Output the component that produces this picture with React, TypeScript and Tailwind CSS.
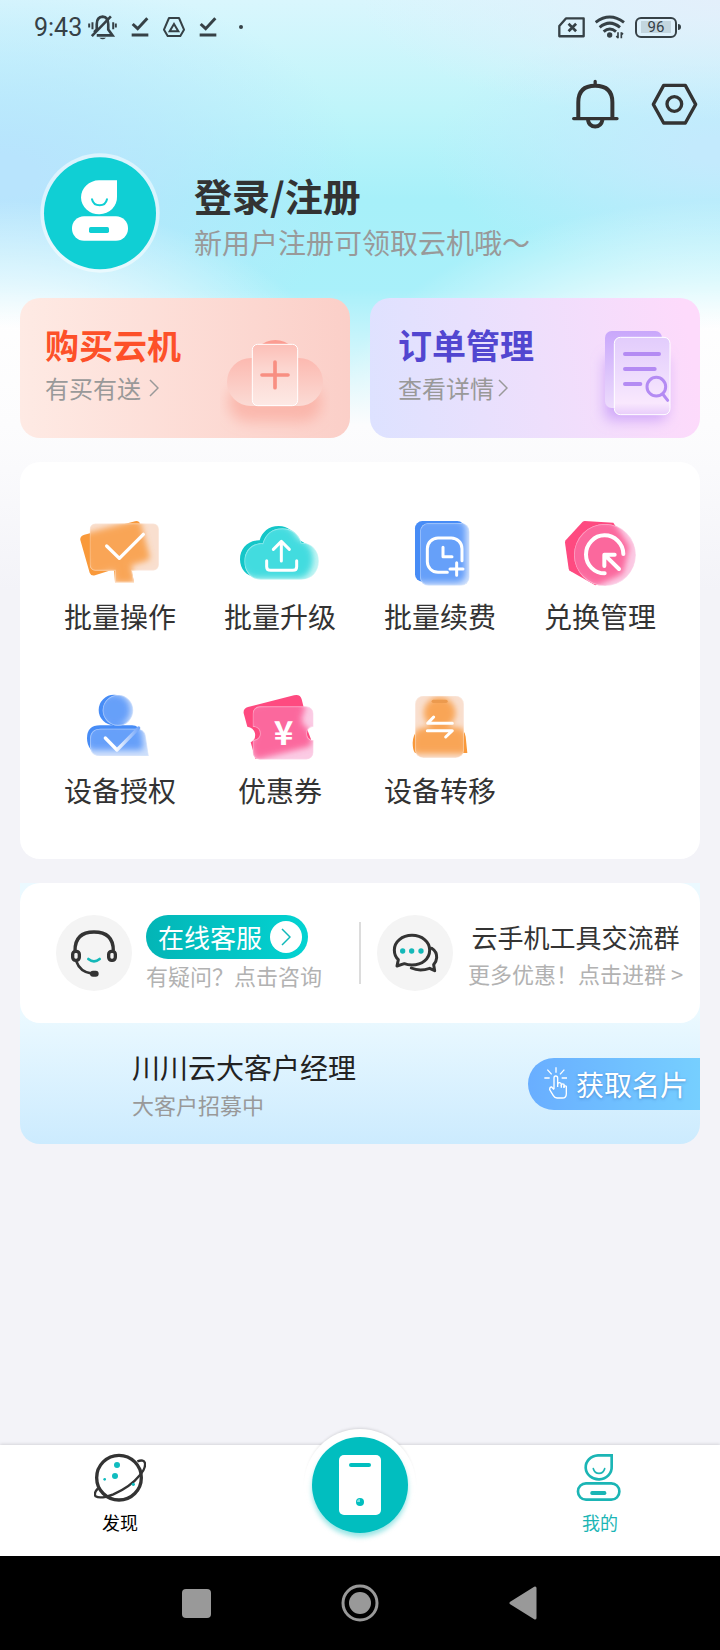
import type { ReactNode } from 'react';

type GlassIconProps = {
  id: string;
  viewBox: string;
  back: string;
  glass: string;
  dark: string;
  mid: string;
  tint: string;
  children: ReactNode;
};

// Solid shape in the back, frosted shape in front of it.
function GlassIcon({ id, viewBox, back, glass, dark, mid, tint, children }: GlassIconProps) {
  return (
    <svg viewBox={viewBox} className="h-[72px] w-20" aria-hidden="true">
      <defs>
        <clipPath id={`${id}-clip`}>
          <path d={glass} />
        </clipPath>
        <filter id={`${id}-blur`} x="-20%" y="-20%" width="140%" height="140%">
          <feGaussianBlur stdDeviation="9" />
        </filter>
      </defs>
      <path d={back} fill={dark} />
      <g clipPath={`url(#${id}-clip)`}>
        <path d={glass} fill={tint} />
        <path d={back} fill={mid} filter={`url(#${id}-blur)`} />
        <path d={back} fill={mid} fillOpacity="0.5" filter={`url(#${id}-blur)`} />
        <path d={glass} fill="none" stroke="#fff" strokeOpacity="0.35" strokeWidth="5" />
      </g>
      <g fill="none" stroke="#fff" strokeWidth="10" strokeLinecap="round" strokeLinejoin="round">
        {children}
      </g>
    </svg>
  );
}

const ORANGE = { dark: '#f9993a', mid: '#f9a656', tint: '#f9dfcf' };
const TEAL = { dark: '#14c6c8', mid: '#43dcdf', tint: '#c5f5f4' };
const BLUE = { dark: '#478cf6', mid: '#669ffa', tint: '#cfe0fb' };
const PINK = { dark: '#fe4a80', mid: '#fc689e', tint: '#fbcbe4' };

const ACTIONS: { label: string; icon: ReactNode }[] = [
  {
    label: '批量操作',
    icon: (
      <GlassIcon
        id="operate"
        viewBox="120 81 240 216"
        {...ORANGE}
        back="M133 134L285 94Q297 91 300 102L328 206L270 224L282 277H225L222 238L165 256Q153 259 149 248L121 150Q119 138 133 134Z"
        glass="M166 100H340A17 17 0 0 1 357 117V225A17 17 0 0 1 340 242H276L282 277H225V242H166A17 17 0 0 1 149 225V117A17 17 0 0 1 166 100Z"
      >
        <path d="M200 168L238 205L310 133" />
      </GlassIcon>
    ),
  },
  {
    label: '批量升级',
    icon: (
      <GlassIcon
        id="upgrade"
        viewBox="600 81 240 216"
        {...TEAL}
        back="M650 262C620 260 600 238 600 208C600 176 624 150 659 151C666 126 686 108 716 108C744 108 762 124 772 150C798 154 816 178 816 206C816 236 800 262 772 262Z"
        glass="M662 269C634 269 613 246 613 214C613 182 636 158 668 160C676 132 697 115 727 115C757 115 777 133 784 158C816 158 837 182 837 213C837 246 815 269 784 269Z"
      >
        <path d="M724 213V155M700 178L724 154L748 178" strokeWidth="9" />
        <path d="M680 212V230Q680 241 692 241H758Q770 241 770 230V212" strokeWidth="9" />
      </GlassIcon>
    ),
  },
  {
    label: '批量续费',
    icon: (
      <GlassIcon
        id="renew"
        viewBox="120 81 240 216"
        {...BLUE}
        back="M187 93H292A22 22 0 0 1 314 115V253A22 22 0 0 1 292 275H187A22 22 0 0 1 165 253V115A22 22 0 0 1 187 93Z"
        glass="M206 99H303A26 26 0 0 1 329 125V261A26 26 0 0 1 303 287H206A26 26 0 0 1 180 261V125A26 26 0 0 1 206 99Z"
      >
        <path d="M262 247H234A32 32 0 0 1 202 215V176A32 32 0 0 1 234 144H274A32 32 0 0 1 306 176V212" strokeWidth="9" />
        <path d="M249 172V200H276M290 218V256M270 237H309" strokeWidth="9" />
      </GlassIcon>
    ),
  },
  {
    label: '兑换管理',
    icon: (
      <GlassIcon
        id="redeem"
        viewBox="600 81 240 216"
        {...PINK}
        back="M674 93L760 98L806 170L786 250L706 286L632 244Q627 241 626 236L615 158Q615 154 617 151L668 95Q671 93 674 93Z"
        glass="M735 102A93 93 0 1 1 735 288A93 93 0 1 1 735 102Z"
      >
        <path d="M790 192A56 57 0 1 0 734 250" strokeWidth="12" />
        <path d="M733 228V194H764M736 197L777 237" strokeWidth="12" />
      </GlassIcon>
    ),
  },
  {
    label: '设备授权',
    icon: (
      <GlassIcon
        id="auth"
        viewBox="120 603 240 216"
        {...BLUE}
        back="M222 614A46 46 0 1 1 222 706H276Q298 706 303 730L308 778H152Q141 765 141 745Q141 706 180 706H222A46 46 0 0 1 222 614Z"
        glass="M234 615A46 46 0 1 1 234 707A46 46 0 1 1 234 615ZM180 799Q150 799 150 765V748Q150 716 182 716H290Q312 716 317 736L327 799Z"
      >
        <defs>
          <linearGradient id="auth-check" x1="0" x2="1">
            <stop offset="0.3" stopColor="#fff" />
            <stop offset="1" stopColor="#74a6f9" />
          </linearGradient>
        </defs>
        <path d="M196 744L231 780L296 714" stroke="url(#auth-check)" />
      </GlassIcon>
    ),
  },
  {
    label: '优惠券',
    icon: (
      <GlassIcon
        id="coupon"
        viewBox="600 603 240 216"
        {...PINK}
        back="M611 670Q609 655 624 651L762 616Q781 612 785 628L793 660Q778 676 784 700Q790 714 800 714L813 748L810 766L646 806L632 757Q648 750 645 730Q640 712 622 710Z"
        glass="M660 649H799A22 22 0 0 1 821 671V710Q801 712 801 731Q801 749 821 751V787A22 22 0 0 1 799 809H660A22 22 0 0 1 638 787V750Q660 748 660 731Q660 712 638 710V671A22 22 0 0 1 660 649Z"
      >
        <text
          x="731"
          y="766"
          textAnchor="middle"
          fontFamily="Noto Sans CJK SC, sans-serif"
          fontSize="100"
          fontWeight="700"
          fill="#fff"
          stroke="none"
        >
          ¥
        </text>
      </GlassIcon>
    ),
  },
  {
    label: '设备转移',
    icon: (
      <GlassIcon
        id="transfer"
        viewBox="120 603 240 216"
        {...ORANGE}
        back="M239 624A44 44 0 0 1 262 706Q262 715 290 715Q313 715 317 740L322 789H165Q158 780 158 758Q160 715 200 715Q216 715 216 706A44 44 0 0 1 239 624Z"
        glass="M190 617H287A25 25 0 0 1 312 642V779A25 25 0 0 1 287 804H190A25 25 0 0 1 165 779V642A25 25 0 0 1 190 617Z"
      >
        <path d="M220 634H258" stroke="#ec9a4e" />
        <path d="M277 700H203L221 681M202 722H277L257 741" strokeWidth="9" />
      </GlassIcon>
    ),
  },
];

function StatusBar() {
  return (
    <div className="flex h-[54px] items-center justify-between pr-[39px] pl-[34px] text-[#364146]">
      <div className="flex items-center">
        <span className="pt-0.5 font-[Roboto,sans-serif] text-[25px] leading-8">9:43</span>
        <div className="ml-1.5 flex items-center gap-3.5">
          <svg viewBox="264 42 87 76" className="h-[25px] w-[29px]" fill="none" stroke="currentColor" strokeWidth="8">
            <path d="M282 94L290 86V70Q290 48 308 47Q325 48 325 70V86L338 104H290" />
            <path d="M275 106L333 46" />
            <path d="M267 68V80M277 64V85M340 64V85M348 68V80" strokeWidth="6" />
            <path d="M298 111H318Q308 121 298 111Z" fill="currentColor" stroke="none" />
          </svg>
          <DownloadDone />
          <svg viewBox="486 50 66 60" className="h-5 w-[22px]" fill="none" stroke="currentColor" strokeWidth="6">
            <path d="M504 53H534L549 88L538 107H500L489 88Z" strokeLinejoin="round" />
            <path d="M519 71L532 93H506Z" />
          </svg>
          <DownloadDone />
          <span className="ml-2 h-1 w-1 rounded-full bg-current" />
        </div>
      </div>
      <div className="flex items-center gap-2.5">
        <svg viewBox="594 51 82 63" className="h-[21px] w-[27px]" fill="none" stroke="currentColor" strokeWidth="7">
          <path d="M618 55H672V109H598V78Z" strokeLinejoin="round" />
          <path d="M626 71L649 94M649 71L626 94" strokeWidth="8" />
        </svg>
        <svg viewBox="704 45 90 72" className="h-6 w-[30px]" fill="none" stroke="currentColor" strokeWidth="9">
          <path d="M706 67Q748 35 791 67M718 82Q748 57 779 82M730 95Q748 79 767 95" />
          <circle cx="748" cy="105" r="8" fill="currentColor" stroke="none" />
          <path d="M773 97V115M768 108L773 114M783 115V97M788 103L783 98" strokeWidth="5" />
        </svg>
        <div className="flex items-center gap-px">
          <span className="flex h-[21px] w-[42px] items-center justify-center rounded-md border-2 border-current p-1">
            <span className="flex h-3 w-full items-center justify-center bg-[#c3d6df] font-[Roboto,sans-serif] text-[15px] leading-3">
              96
            </span>
          </span>
          <span className="h-1.5 w-[3px] rounded-r-sm bg-current" />
        </div>
      </div>
    </div>
  );
}

function DownloadDone() {
  return (
    <svg viewBox="391 51 54 60" className="h-5 w-[18px]" fill="none" stroke="currentColor" strokeWidth="9">
      <path d="M396 72L411 86L440 55M393 105H443" />
    </svg>
  );
}

function Chevron() {
  return (
    <svg viewBox="0 0 10 18" className="h-[18px] w-2.5" fill="none" stroke="currentColor" strokeWidth="1.5">
      <path d="M1 1L9 9L1 17" />
    </svg>
  );
}

function Header() {
  return (
    <header>
      <StatusBar />
      <div className="flex justify-end gap-8 pt-[25px] pr-[22px] pb-6 text-[#333]">
        <button type="button" aria-label="消息">
          <svg viewBox="636 235 142 150" className="h-[50px] w-[47px]" fill="none" stroke="currentColor" strokeWidth="12">
            <path d="M655 350V305Q655 255 706 255Q758 255 758 305V350" />
            <path d="M641 354H772M706 242V254" strokeLinecap="round" strokeWidth="10" />
            <path d="M684 358Q688 378 706 378Q724 378 728 358" />
          </svg>
        </button>
        <button type="button" aria-label="设置">
          <svg viewBox="873 235 141 150" className="h-[50px] w-[47px]" fill="none" stroke="currentColor" strokeWidth="10">
            <path d="M911 254H976L1007 311L976 367H911L880 311Z" strokeLinejoin="round" />
            <circle cx="943" cy="310" r="22" />
          </svg>
        </button>
      </div>
      <div className="flex items-center gap-[34px] px-10">
        <svg viewBox="120 459 360 360" className="h-[120px] w-[120px] shrink-0">
          <circle cx="300" cy="639" r="179" fill="#fff" fillOpacity="0.5" />
          <circle cx="300" cy="640" r="168" fill="#10cfd4" />
          <path d="M297 541H351V590A54 51 0 1 1 297 541Z" fill="#fff" />
          <path d="M276 598Q280 616 299 616Q317 616 321 598" fill="none" stroke="#10cfd4" strokeWidth="6" strokeLinecap="round" />
          <rect x="216" y="649" width="168" height="73" rx="36" fill="#fff" />
          <rect x="267" y="681" width="60" height="18" rx="5" fill="#10cfd4" />
        </svg>
        <div className="pt-2.5">
          <h1 className="text-[38px] leading-[48px] font-bold text-[#333]">登录/注册</h1>
          <p className="text-[28px] leading-[46px] text-[#999]">新用户注册可领取云机哦～</p>
        </div>
      </div>
    </header>
  );
}

function PromoCards() {
  return (
    <div className="mt-[25px] grid grid-cols-2 gap-5">
      <button
        type="button"
        className="flex h-[140px] justify-between rounded-[20px] bg-linear-to-r from-[#feeae4] to-[#fbcfc8] pr-5 pl-[25px] text-left"
      >
        <span className="block pt-[23px]">
          <span className="block text-[34px] leading-[48px] font-bold text-[#fd5029]">购买云机</span>
          <span className="flex items-center gap-2 text-2xl leading-[38px] text-[#999]">
            有买有送
            <Chevron />
          </span>
        </span>
        <svg viewBox="660 54 330 420" className="h-[140px] w-[110px]" aria-hidden="true">
          <defs>
            <linearGradient id="cloud-body" x1="0" x2="0" y1="0" y2="1">
              <stop offset="0" stopColor="#fcb9b0" />
              <stop offset="1" stopColor="#fbdbd5" />
            </linearGradient>
            <linearGradient id="cloud-phone" x1="0" x2="0" y1="0" y2="1">
              <stop offset="0" stopColor="#fcbfb7" />
              <stop offset="0.4" stopColor="#fcd6d0" />
              <stop offset="1" stopColor="#fde9e5" />
            </linearGradient>
            <filter id="cloud-shadow" x="-20%" y="-60%" width="140%" height="220%">
              <feGaussianBlur stdDeviation="20" />
            </filter>
          </defs>
          <rect x="685" y="310" width="280" height="115" rx="55" fill="#fa9f90" fillOpacity="0.55" filter="url(#cloud-shadow)" />
          <circle cx="826" cy="250" r="70" fill="#fb9d92" />
          <rect x="681" y="234" width="288" height="144" rx="72" fill="url(#cloud-body)" />
          <rect x="757" y="193" width="136" height="184" rx="16" fill="url(#cloud-phone)" stroke="#fff" strokeWidth="3" />
          <path d="M825 246V323M786 285H864" fill="none" stroke="#f88f82" strokeWidth="11" strokeLinecap="round" />
        </svg>
      </button>
      <button
        type="button"
        className="flex h-[140px] justify-between rounded-[20px] bg-[linear-gradient(80deg,#dde2ff,#eedffc_50%,#fddafb_95%)] pr-5 pl-7 text-left"
      >
        <span className="block pt-[23px]">
          <span className="block text-[34px] leading-[48px] font-bold text-[#5246d0]">订单管理</span>
          <span className="flex items-center gap-1 text-2xl leading-[38px] text-[#999]">
            查看详情
            <Chevron />
          </span>
        </span>
        <svg viewBox="690 54 270 420" className="h-[140px] w-[90px]" aria-hidden="true">
          <defs>
            <linearGradient id="doc-back" x1="0" x2="0" y1="0" y2="1">
              <stop offset="0" stopColor="#c9a7fb" />
              <stop offset="1" stopColor="#eddcfc" />
            </linearGradient>
            <linearGradient id="doc-front" x1="0" x2="0" y1="0" y2="1">
              <stop offset="0" stopColor="#e2ccfc" />
              <stop offset="0.5" stopColor="#eedcfd" />
              <stop offset="0.85" stopColor="#f9e8fd" />
              <stop offset="1" stopColor="#e8cdfb" />
            </linearGradient>
            <filter id="doc-shadow" x="-30%" y="-30%" width="160%" height="160%">
              <feGaussianBlur stdDeviation="20" />
            </filter>
          </defs>
          <rect x="735" y="230" width="186" height="190" rx="20" fill="#b98af8" fillOpacity="0.65" filter="url(#doc-shadow)" />
          <rect x="735" y="153" width="171" height="231" rx="20" fill="url(#doc-back)" />
          <rect x="763" y="172" width="167" height="232" rx="18" fill="url(#doc-front)" stroke="#fff" strokeWidth="3" />
          <g fill="none" stroke="#b48bf3" strokeLinecap="round" strokeWidth="12">
            <path d="M795 222H897M795 267H884M795 312H841" />
            <circle cx="889" cy="320" r="28" strokeWidth="9" />
            <path d="M908 342L923 361" strokeWidth="9" />
          </g>
        </svg>
      </button>
    </div>
  );
}

function ActionGrid() {
  return (
    <section className="mt-6 grid grid-cols-4 gap-y-14 rounded-[20px] bg-white px-5 pt-[55px] pb-[50px]">
      {ACTIONS.map(({ label, icon }) => (
        <button key={label} type="button" className="flex flex-col items-center gap-2">
          {icon}
          <span className="text-[28px] leading-[38px] text-[#333]">{label}</span>
        </button>
      ))}
    </section>
  );
}

function Services() {
  return (
    <section className="mt-6 rounded-b-[20px] bg-linear-to-b from-[#ebf9ff] from-50% to-[#ccebfe]">
      <div className="flex items-center rounded-[20px] bg-white py-8">
        <button type="button" className="flex w-1/2 items-center gap-3.5 pl-9 text-left">
          <svg viewBox="168 165 228 228" className="h-[76px] w-[76px] shrink-0" fill="none" stroke="#333" strokeWidth="10">
            <circle cx="282" cy="279" r="114" fill="#f4f4f4" stroke="none" />
            <path d="M225 272Q225 216 282 216Q340 216 340 272" />
            <rect x="218" y="274" width="20" height="27" rx="9" />
            <rect x="326" y="274" width="20" height="27" rx="9" />
            <path d="M229 304Q240 336 276 341" strokeWidth="8" />
            <rect x="270" y="332" width="26" height="18" rx="9" fill="#333" stroke="none" />
            <path d="M265 297Q282 311 299 297" stroke="#14b8b8" strokeWidth="8" strokeLinecap="round" />
          </svg>
          <span className="flex flex-col items-start">
            <span className="flex h-11 items-center gap-2 rounded-full bg-linear-to-r from-[#03b5b6] to-[#03d3d2] pr-1.5 pl-3 text-[26px] leading-10 text-white">
              在线客服
              <span className="flex h-8 w-8 items-center justify-center rounded-full bg-white text-[#10b9b9]">
                <Chevron />
              </span>
            </span>
            <span className="text-[22px] leading-8 text-[#b2b2b2]">有疑问？点击咨询</span>
          </span>
        </button>
        <span className="h-[62px] w-0.5 bg-[#dcdcdc]" />
        <button type="button" className="flex w-1/2 items-center gap-[15px] pl-4">
          <svg viewBox="52 165 228 228" className="h-[76px] w-[76px] shrink-0" fill="none" stroke="#333" strokeWidth="9" strokeLinejoin="round">
            <circle cx="166" cy="279" r="114" fill="#f4f4f4" stroke="none" />
            <path d="M216 265Q232 275 231 293Q230 306 222 314L225 332L210 325Q180 335 155 324" strokeLinecap="round" />
            <path
              d="M157 226C187 226 210 245 210 270C210 297 187 315 157 315Q144 315 134 311L112 318L116 299Q104 288 104 270C104 245 127 226 157 226Z"
              fill="#f4f4f4"
            />
            <g fill="#14b8b8" stroke="none">
              <circle cx="129" cy="273" r="8" />
              <circle cx="156" cy="273" r="8" />
              <circle cx="184" cy="273" r="8" />
            </g>
          </svg>
          <span className="block pt-1 text-center whitespace-nowrap">
            <span className="block text-[26px] leading-9 text-[#333]">云手机工具交流群</span>
            <span className="block text-[22px] leading-9 text-[#b2b2b2]">更多优惠！点击进群 &gt;</span>
          </span>
        </button>
      </div>
      <div className="flex h-[121px] items-center justify-between pl-28">
        <div>
          <h2 className="text-[28px] leading-10 text-[#222]">川川云大客户经理</h2>
          <p className="text-[22px] leading-[34px] text-[#999]">大客户招募中</p>
        </div>
        <button
          type="button"
          className="flex h-[52px] items-center gap-2 rounded-l-full bg-linear-to-r from-[#69aeff] to-[#76cfff] pr-3 pl-4 text-[28px] leading-10 text-white text-shadow-[0_1px_3px_rgb(60_120_190/0.7)]"
        >
          <svg viewBox="555 624 72 99" className="h-[33px] w-6" fill="none" stroke="#fff" strokeWidth="4" strokeLinejoin="round">
            <path d="M591 625V641M565 632L578 646M616 632L603 646M556 657H572M608 657H624" />
            <path d="M585 690V657Q585 651 590 651Q596 651 596 657V676Q597 669 605 672Q607 674 607 680Q608 672 615 676V684Q617 678 622 682V704Q622 717 610 717H594Q587 717 583 710L572 692Q572 683 578 684L585 692" />
            <path d="M596 676V684M607 678V686M615 680V687" />
          </svg>
          获取名片
        </button>
      </div>
    </section>
  );
}

function TabBar() {
  return (
    <nav className="relative grid h-[111px] grid-cols-3 bg-white text-lg leading-6 shadow-[0_-1px_3px_rgb(0_0_0/0.12)]">
      <button type="button" className="flex flex-col items-center gap-[7px] pt-2 text-black">
        <svg viewBox="282 129 156 150" className="h-[50px] w-[52px]" fill="none" stroke="#333" strokeWidth="10">
          <circle cx="357" cy="203" r="67" />
          <path
            d="M412 154Q432 147 435 160Q437 176 420 195Q391 231 340 253Q301 268 287 259Q280 249 294 235"
            strokeWidth="7"
          />
          <g fill="#10bcbf" stroke="none">
            <circle cx="351" cy="165" r="9" />
            <circle cx="345" cy="198" r="9" />
            <circle cx="314" cy="208" r="4" />
            <circle cx="400" cy="223" r="5" />
          </g>
        </svg>
        发现
      </button>
      <div className="relative">
        <button
          type="button"
          aria-label="云手机"
          className="absolute -top-4 left-1/2 flex h-28 w-28 -translate-x-1/2 items-center justify-center rounded-full bg-white shadow-[0_-3px_3px_-2px_rgb(0_0_0/0.12)]"
        >
          <span className="flex h-24 w-24 items-center justify-center rounded-full bg-[#01bebf] shadow-[0_4px_5px_rgb(1_190_191/0.4)]">
            <svg viewBox="0 0 42 60" className="h-[60px] w-[42px]">
              <rect x="0" y="0" width="42" height="60" rx="5" fill="#fff" />
              <rect x="10" y="8" width="22" height="4" rx="2" fill="#01bebf" />
              <circle cx="21" cy="47" r="4" fill="#01bebf" />
              <path d="M18 47A3 3 0 0 1 21 44V47Z" fill="#7be0e0" />
            </svg>
          </span>
        </button>
      </div>
      <button type="button" aria-current="page" className="flex flex-col items-center gap-[7px] pt-2 text-[#1bb5b5]">
        <svg viewBox="648 129 144 150" className="h-[50px] w-12" fill="none" stroke="currentColor" strokeWidth="8">
          <path d="M714 136H755V170A39 36 0 1 1 714 136Z" />
          <path d="M700 176Q704 190 717 190Q730 190 734 176" strokeWidth="5" strokeLinecap="round" />
          <rect x="654" y="220" width="124" height="49" rx="24" />
          <rect x="691" y="243" width="48" height="12" rx="5" fill="currentColor" stroke="none" />
        </svg>
        我的
      </button>
    </nav>
  );
}

function SystemNav() {
  return (
    <div className="flex h-[94px] items-center justify-center gap-[130px] bg-black pr-0.5 text-[#999]">
      <button type="button" aria-label="最近任务" className="h-[29px] w-[29px] rounded bg-current" />
      <button type="button" aria-label="主屏幕">
        <svg viewBox="0 0 38 38" className="h-[38px] w-[38px]">
          <circle cx="19" cy="19" r="17" fill="none" stroke="currentColor" strokeWidth="3" />
          <circle cx="19" cy="19" r="11" fill="currentColor" />
        </svg>
      </button>
      <button type="button" aria-label="返回">
        <svg viewBox="0 0 28 34" className="h-[34px] w-7">
          <path d="M2 17L26 2V32Z" fill="currentColor" stroke="currentColor" strokeWidth="3" strokeLinejoin="round" />
        </svg>
      </button>
    </div>
  );
}

export default function App() {
  return (
    <div className="flex min-h-screen flex-col bg-[#f3f3f8] bg-[linear-gradient(transparent_290px,#fcfcfd_425px,#fafafc_470px,#f3f3f8_590px),radial-gradient(ellipse_50%_220px_at_0_420px,#fff_42%,#fff9_64%,#fff0),radial-gradient(ellipse_54%_230px_at_100%_430px,#fff_44%,#fff9_66%,#fff0),radial-gradient(ellipse_50%_200px_at_0_175px,#b8e4fd_10%,#b8e4fd00),radial-gradient(ellipse_50%_120px_at_100%_0,#e3effb,#e3effb00),radial-gradient(ellipse_40%_130px_at_100%_150px,#c3eafd_10%,#c3eafd00),linear-gradient(#d9f6fd,#bff5fa_110px,#a7f0f9_200px,#a9f0fa_300px)] bg-no-repeat font-['Noto_Sans_CJK_SC',sans-serif]">
      <Header />
      <main className="flex-1 px-5">
        <PromoCards />
        <ActionGrid />
        <Services />
      </main>
      <TabBar />
      <SystemNav />
    </div>
  );
}
